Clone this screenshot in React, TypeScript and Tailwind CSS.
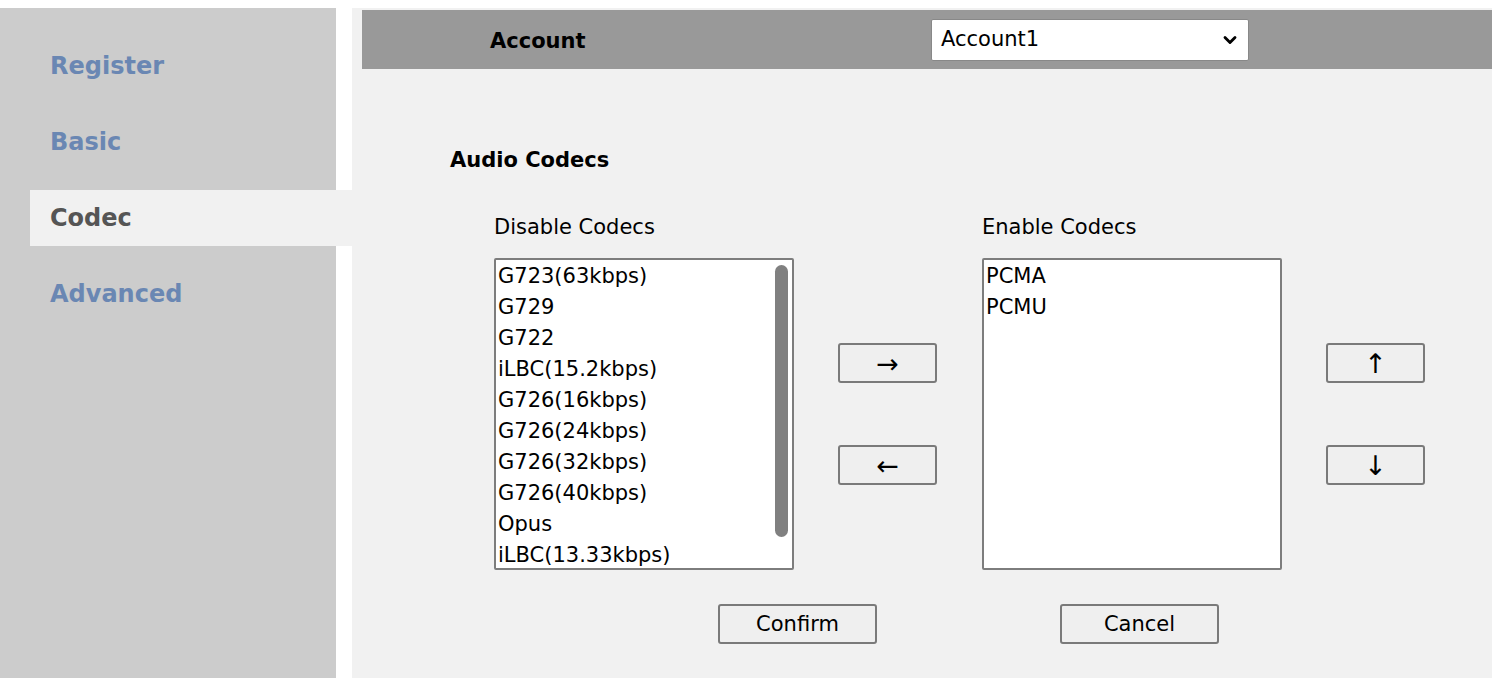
import { ChevronDown } from 'lucide-react'

const DISABLED = [
  'G723(63kbps)',
  'G729',
  'G722',
  'iLBC(15.2kbps)',
  'G726(16kbps)',
  'G726(24kbps)',
  'G726(32kbps)',
  'G726(40kbps)',
  'Opus',
  'iLBC(13.33kbps)',
]
const ENABLED = ['PCMA', 'PCMU']

const NAV = ['Register', 'Basic', 'Codec', 'Advanced']

function Btn({ children, className = '' }: { children: React.ReactNode; className?: string }) {
  return (
    <button
      className={`flex h-[40px] items-center justify-center rounded-[3px] border-2 border-[#7a7a7a] bg-[#efefef] leading-none text-black ${className}`}
    >
      {children}
    </button>
  )
}

function ListBox({ items, scroll }: { items: string[]; scroll?: boolean }) {
  return (
    <div className="relative h-[312px] w-[300px] border-2 border-[#7d7d7d] bg-white pl-[2px] pt-[1px] rounded-[2px]">
      {items.map(i => (
        <div key={i} className="h-[31px] text-[21px] leading-[31px] text-black">{i}</div>
      ))}
      {scroll && <div className="absolute right-[4px] top-[5px] h-[272px] w-[13px] rounded-full bg-[#808080]" />}
    </div>
  )
}

export default function App() {
  return (
    <div className="h-[678px] w-[1492px] overflow-hidden bg-white pt-[8px] font-['DejaVu_Sans',sans-serif]">
      <div className="flex h-full">
        <div className="w-[336px] shrink-0 bg-[#cccccc] pt-[30px]">
          {NAV.map(n => (
            <div key={n} className={`ml-[30px] flex h-[56px] items-center pl-[20px] text-[24px] font-bold ${n === 'Codec' ? 'w-[322px] bg-[#f1f1f1] text-[#555555]' : 'text-[#6a87b3]'} ${n === 'Register' ? '' : 'mt-[20px]'}`}>
              {n}
            </div>
          ))}
        </div>
        <div className="ml-[16px] flex-1 bg-[#f1f1f1] pl-[10px] pt-[2px]">
          <div className="flex h-[59px] items-center bg-[#999999] pt-[4px]">
            <div className="ml-[128px] w-[441px] text-[21px] font-bold text-black">Account</div>
            <div className="flex h-[42px] w-[318px] -translate-y-[2px] items-center justify-between rounded-[2px] border border-[#888] bg-white pl-[9px] pr-[8px] text-[21px] text-black">
              <span>Account1</span>
              <ChevronDown className="h-[20px] w-[20px]" strokeWidth={3.4} />
            </div>
          </div>
          <div className="ml-[88px] mt-[81px] text-[21px] font-bold leading-none text-black">Audio Codecs</div>
          <div className="ml-[132px] mt-[46px] flex">
            <div>
              <div className="text-[21px] leading-none text-black">Disable Codecs</div>
              <div className="mt-[20px]"><ListBox items={DISABLED} scroll /></div>
            </div>
            <div className="ml-[44px] flex flex-col pt-[126px] text-[27px]">
              <Btn className="w-[99px]">→</Btn>
              <Btn className="mt-[62px] w-[99px]">←</Btn>
            </div>
            <div className="ml-[45px]">
              <div className="text-[21px] leading-none text-black">Enable Codecs</div>
              <div className="mt-[20px]"><ListBox items={ENABLED} /></div>
            </div>
            <div className="ml-[44px] flex flex-col pt-[126px] text-[27px]">
              <Btn className="w-[99px]">↑</Btn>
              <Btn className="mt-[62px] w-[99px]">↓</Btn>
            </div>
          </div>
          <div className="ml-[356px] mt-[34px] flex text-[21px]">
            <Btn className="w-[159px]">Confirm</Btn>
            <Btn className="ml-[183px] w-[159px]">Cancel</Btn>
          </div>
        </div>
      </div>
    </div>
  )
}
